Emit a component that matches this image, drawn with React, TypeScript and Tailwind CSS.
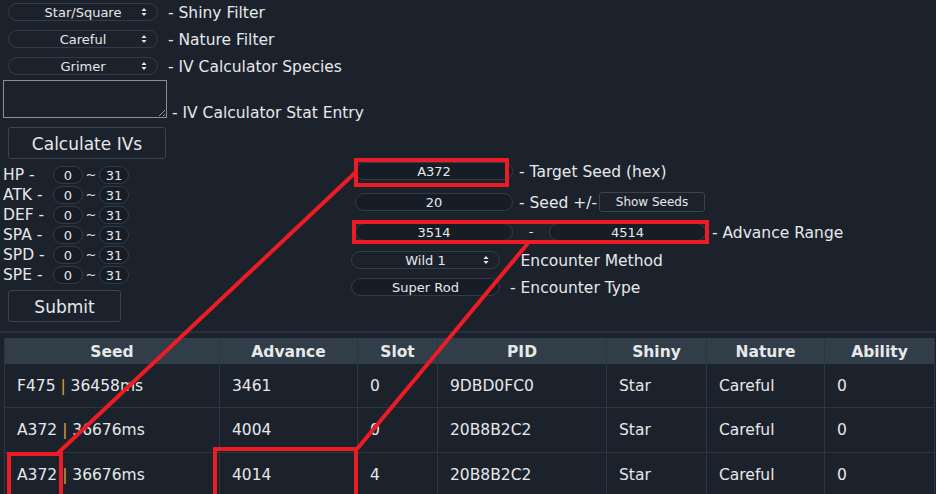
import React from "react";

const Arrows = () => (
  <svg width="6" height="9" viewBox="0 0 6 9" className="absolute right-[10px] top-1/2 -translate-y-1/2">
    <path d="M3 0.5 L5.5 3.5 L0.5 3.5 Z" fill="#e6e8ea" />
    <path d="M3 8.5 L5.5 5.5 L0.5 5.5 Z" fill="#e6e8ea" />
  </svg>
);

const Select = ({ value, w }: { value: string; w: string }) => (
  <div className={`relative ${w} h-[18px] rounded-full border border-[#323c47] flex items-center justify-center text-[13px] leading-none`}>
    <span className="pt-[1px]">{value}</span>
    <Arrows />
  </div>
);

const Pill = ({ value, w }: { value: string; w: string }) => (
  <div className={`${w} h-[18px] rounded-full border border-[#323c47] bg-[#161d26] flex items-center justify-center text-[13px] leading-none`}>
    <span className="pt-[1px]">{value}</span>
  </div>
);

const Label = ({ children, className = "" }: { children: React.ReactNode; className?: string }) => (
  <span className={`text-[15.5px] leading-none pt-[4px] whitespace-nowrap ${className}`}>{children}</span>
);

const stats = ["HP", "ATK", "DEF", "SPA", "SPD", "SPE"];

const cols = [
  { name: "Seed", w: "w-[215px]" },
  { name: "Advance", w: "w-[138px]" },
  { name: "Slot", w: "w-[80px]" },
  { name: "PID", w: "w-[169px]" },
  { name: "Shiny", w: "w-[100px]" },
  { name: "Nature", w: "w-[118px]" },
  { name: "Ability", w: "w-[110px]" },
];

const rows: (string | React.ReactNode)[][] = [
  [
    <span key="a">F475 <span className="text-[#d9a53f]">|</span> 36458ms</span>,
    "3461",
    "0",
    "9DBD0FC0",
    "Star",
    "Careful",
    "0",
  ],
  [
    <span key="b">A372 <span className="text-[#d9a53f]">|</span> 36676ms</span>,
    "4004",
    "0",
    "20B8B2C2",
    "Star",
    "Careful",
    "0",
  ],
  [
    <span key="c">A372 <span className="text-[#d9a53f]">|</span> 36676ms</span>,
    "4014",
    "4",
    "20B8B2C2",
    "Star",
    "Careful",
    "0",
  ],
];

export default function App() {
  return (
    <div className="relative w-[936px] h-[494px] overflow-hidden bg-[#1b222c] text-[#e6e8ea] font-['DejaVu_Sans',sans-serif]">
      <div className="pt-[3px]">
        <div className="flex items-center h-[18px] pl-[8px] gap-[10px]">
          <Select value="Star/Square" w="w-[150px]" />
          <Label>- Shiny Filter</Label>
        </div>
        <div className="flex items-center h-[18px] pl-[8px] gap-[10px] mt-[9px]">
          <Select value="Careful" w="w-[150px]" />
          <Label>- Nature Filter</Label>
        </div>
        <div className="flex items-center h-[18px] pl-[8px] gap-[10px] mt-[9px]">
          <Select value="Grimer" w="w-[150px]" />
          <Label>- IV Calculator Species</Label>
        </div>
        <div className="flex items-end pl-[3px] gap-[5px] mt-[5px]">
          <textarea className="w-[164px] h-[38px] border border-[#8a8f94] bg-[#1b222c] block outline-none" />
          <span className="text-[15.5px] leading-none mb-[-3px]">- IV Calculator Stat Entry</span>
        </div>
        <div className="pl-[8px] mt-[9px]">
          <button className="w-[158px] h-[32px] rounded-[3px] border border-[#3a444e] text-[17px] leading-none pt-[2px] text-[#e6e8ea]">
            Calculate IVs
          </button>
        </div>
      </div>

      <div className="flex">
        <div className="w-[350px] pt-[6px]">
          {stats.map((s) => (
            <div key={s} className="flex items-center h-[20px] pl-[3px]">
              <span className="w-[50px] text-[15.5px] leading-none pt-[2px]">{s} -</span>
              <Pill value="0" w="w-[30px]" />
              <span className="w-[16px] text-center text-[13px]">~</span>
              <Pill value="31" w="w-[30px]" />
            </div>
          ))}
          <div className="pl-[8px] mt-[5px]">
            <button className="w-[113px] h-[32px] rounded-[3px] border border-[#3a444e] text-[17px] leading-none pt-[2px] text-[#e6e8ea]">
              Submit
            </button>
          </div>
        </div>
        <div className="pt-[3px]">
          <div className="flex items-center h-[18px] pl-[5px] gap-[6px]">
            <Pill value="A372" w="w-[158px]" />
            <Label>- Target Seed (hex)</Label>
          </div>
          <div className="flex items-center h-[19px] pl-[5px] mt-[12px]">
            <Pill value="20" w="w-[158px]" />
            <Label className="ml-[6px]">- Seed +/-</Label>
            <button className="ml-[2px] w-[106px] h-[20px] rounded-[3px] border border-[#3a444e] text-[12px] leading-none pt-[1px] text-[#e6e8ea]">
              Show Seeds
            </button>
          </div>
          <div className="flex items-center h-[18px] pl-[5px] mt-[12px]">
            <Pill value="3514" w="w-[158px]" />
            <span className="w-[36px] text-center text-[13px]">-</span>
            <Pill value="4514" w="w-[157px]" />
            <Label className="ml-[6px]">- Advance Range</Label>
          </div>
          <div className="flex items-center h-[18px] pl-[1px] gap-[10px] mt-[10px]">
            <Select value="Wild 1" w="w-[149px]" />
            <Label>- Encounter Method</Label>
          </div>
          <div className="flex items-center h-[18px] pl-[1px] gap-[10px] mt-[9px]">
            <Pill value="Super Rod" w="w-[149px]" />
            <Label>- Encounter Type</Label>
          </div>
        </div>
      </div>

      <div className="absolute left-0 top-[331px] w-full h-[2px] bg-[#28313b]" />

      <div className="absolute left-[4px] top-[338px] border-l border-[#2c3640]">
        <div className="flex bg-[#313d48] h-[26px]">
          {cols.map((c) => (
            <div key={c.name} className={`${c.w} border-r border-[#2c3640] flex items-center justify-center text-[15.5px] font-bold leading-none pt-[3px]`}>
              {c.name}
            </div>
          ))}
        </div>
        {rows.map((r, i) => (
          <div key={i} className={`flex ${i === 0 ? "h-[44px]" : "h-[45px]"} border-b border-[#2c3640]`}>
            {r.map((cell, j) => (
              <div key={j} className={`${cols[j].w} border-r border-[#2c3640] flex items-center pl-[12px] text-[15.5px] leading-none pt-[2px]`}>
                {cell}
              </div>
            ))}
          </div>
        ))}
      </div>

      <svg className="absolute inset-0 pointer-events-none" width="936" height="494">
        <g fill="none" stroke="#ed1c24" strokeWidth="4">
          <rect x="356" y="160" width="151" height="25" />
          <rect x="354" y="222" width="353" height="20" />
          <rect x="9" y="454" width="52" height="50" />
          <rect x="215" y="449" width="141" height="60" />
          <line x1="357" y1="171" x2="58" y2="453" />
          <line x1="529" y1="242" x2="357" y2="449" />
        </g>
      </svg>
    </div>
  );
}
